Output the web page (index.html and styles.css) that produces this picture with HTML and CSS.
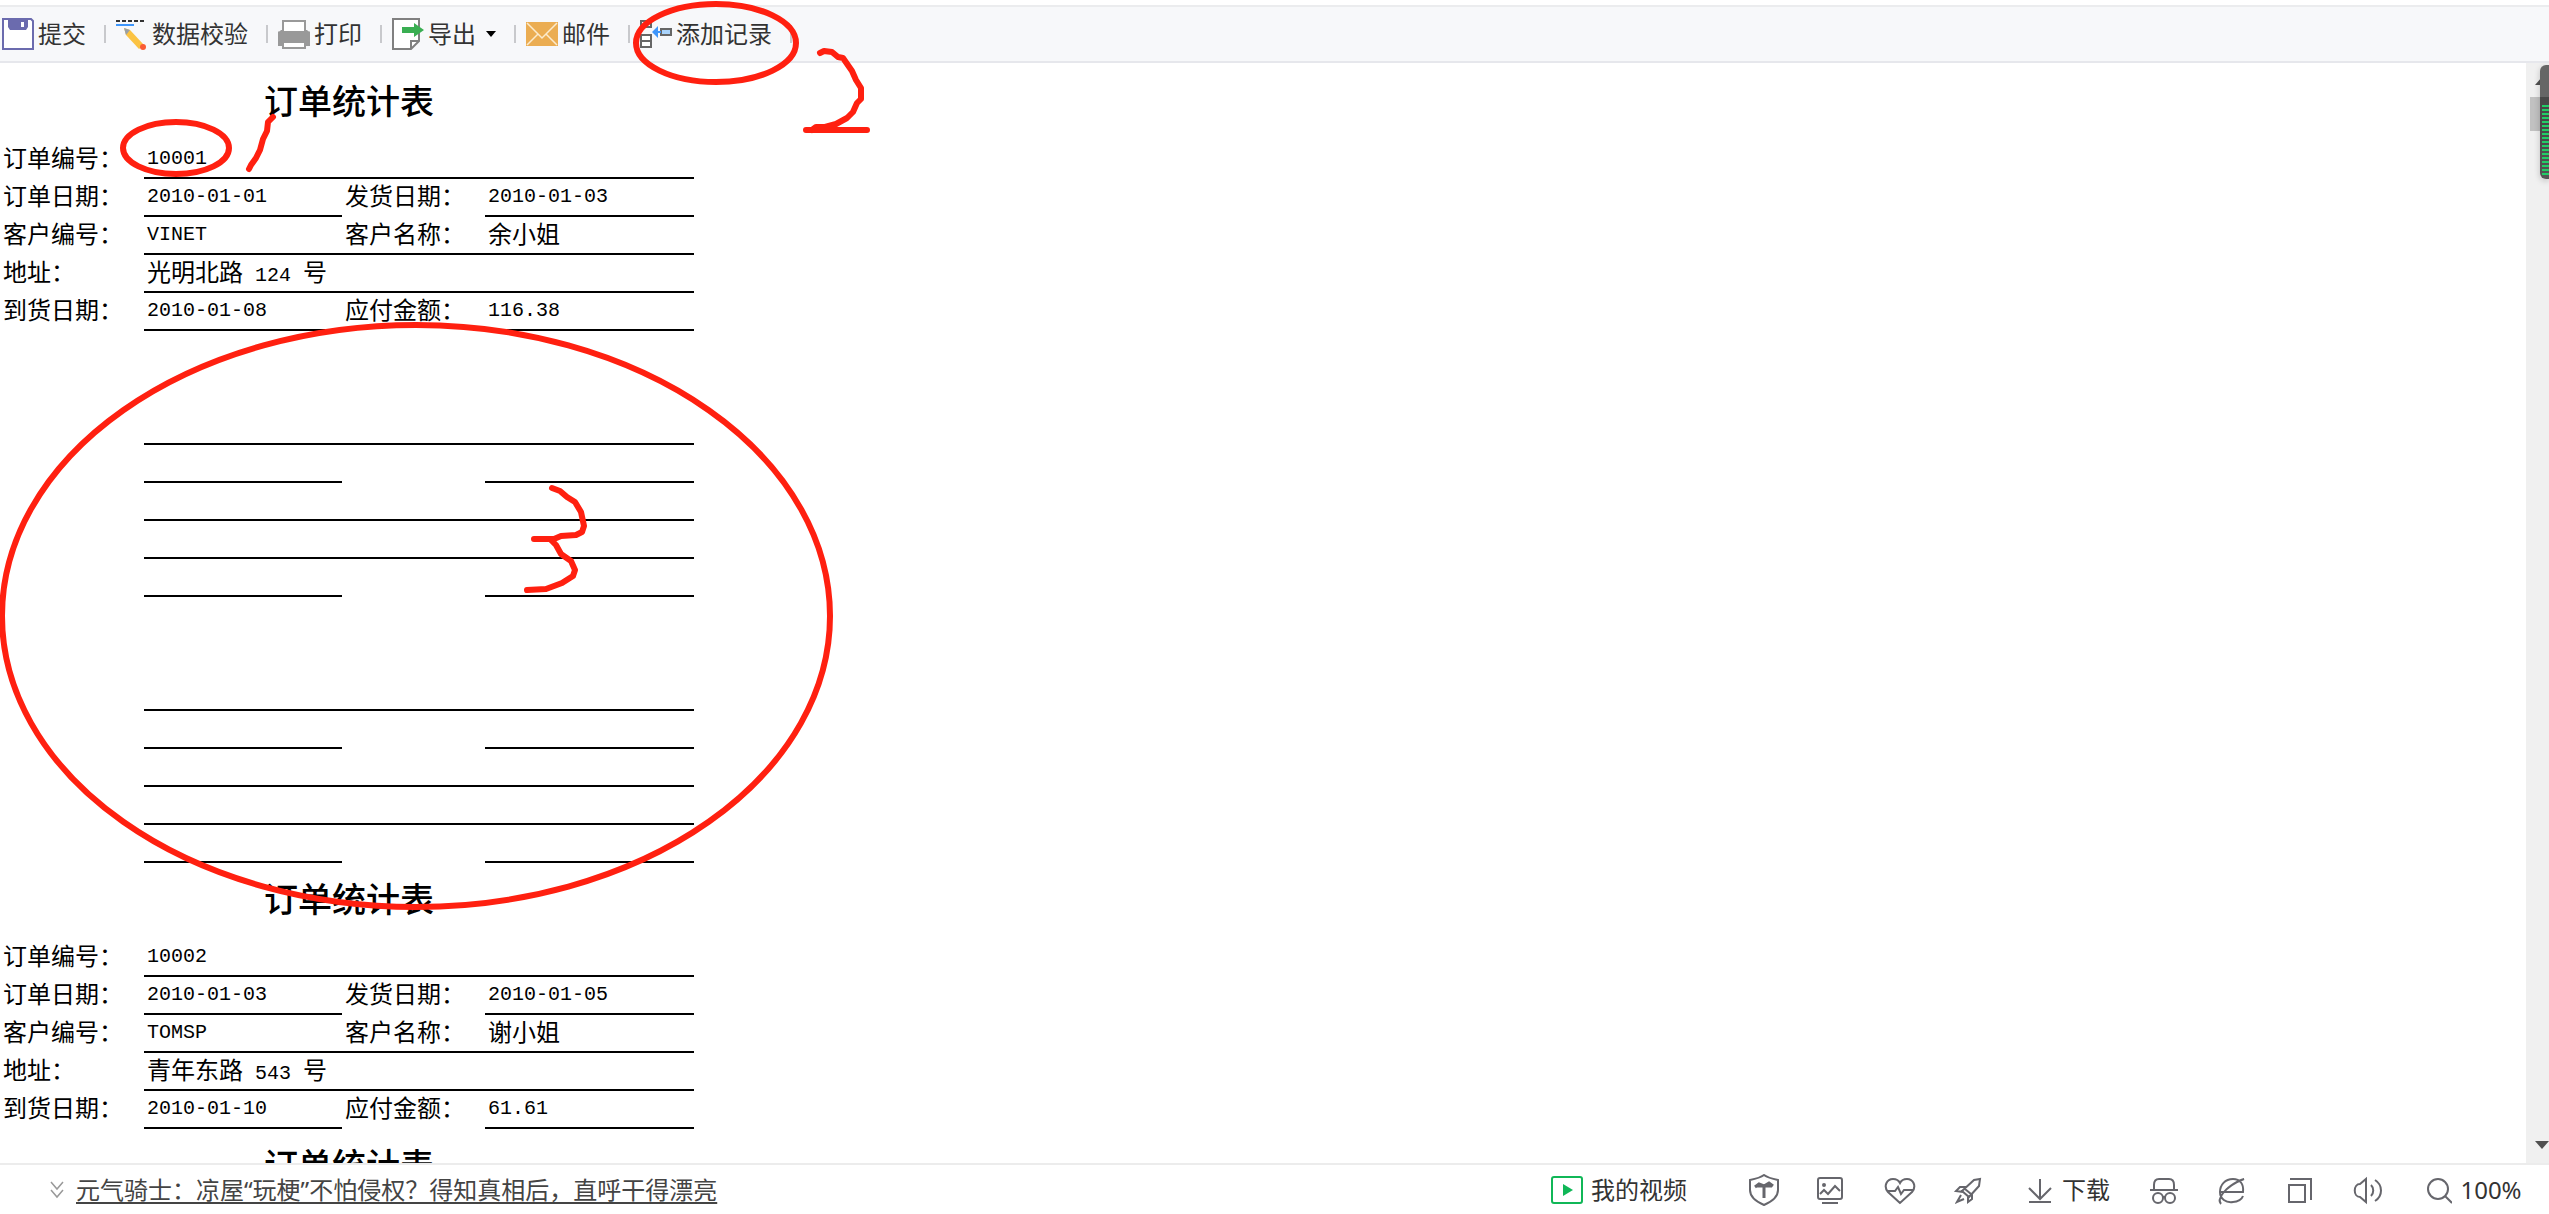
FILE: index.html
```html
<!DOCTYPE html>
<html lang="zh-CN">
<head>
<meta charset="utf-8">
<title>订单统计表</title>
<link rel="stylesheet" href="styles.css">
</head>
<body>
<div class="toolbar" role="toolbar">
  <button class="tool" type="button">
    <svg class="icon" viewBox="0 0 32 32"><path d="M1 1H29L31 3V31H1Z" fill="#fff" stroke="#6b6bae" stroke-width="2"/><path d="M6 1H26V9L24 12H8L6 9Z" fill="#6b6bae"/><rect x="19" y="4" width="3" height="5" fill="#fff"/></svg>
    <span>提交</span>
  </button>
  <i class="sep"></i>
  <button class="tool" type="button">
    <svg class="icon" viewBox="0 0 32 32"><path d="M0 3H28" stroke="#333" stroke-width="2" stroke-dasharray="4 2"/><path d="M0 7H18" stroke="#3f96fb" stroke-width="2"/><path d="M8 10L14 12L28 27L23 31L10 17Z" fill="#fbc343"/><path d="M8 10L14 12L10 17Z" fill="#9aa0a6"/><circle cx="27" cy="29" r="3" fill="#fa5c34"/></svg>
    <span>数据校验</span>
  </button>
  <i class="sep"></i>
  <button class="tool" type="button">
    <svg class="icon" viewBox="0 0 32 32"><path d="M3 12H29L32 15V28H0V15Z" fill="#999"/><rect x="5" y="3" width="22" height="11" fill="#fff" stroke="#999" stroke-width="2"/><path d="M0 15H32" stroke="#999" stroke-width="3"/><rect x="5" y="24" width="22" height="6" fill="#fff" stroke="#999" stroke-width="2"/></svg>
    <span>打印</span>
  </button>
  <i class="sep"></i>
  <button class="tool" type="button">
    <svg class="icon" viewBox="0 0 32 32"><path d="M1 1H27V23L19 31H1Z" fill="#fff" stroke="#808080" stroke-width="2"/><path d="M19 31V23H27" fill="none" stroke="#808080" stroke-width="2"/><path d="M10 9H22V5L32 12L22 19V15H10Z" fill="#3aae52"/></svg>
    <span>导出</span>
    <svg class="caret" viewBox="0 0 10 6"><path d="M0 0H10L5 6Z"/></svg>
  </button>
  <i class="sep"></i>
  <button class="tool" type="button">
    <svg class="icon" viewBox="0 0 32 32"><rect y="4" width="32" height="24" fill="#ebad52"/><path d="M1 5L16 20L31 5M1 27L12 16M31 27L20 16" fill="none" stroke="#fcebcd" stroke-width="1.5"/></svg>
    <span>邮件</span>
  </button>
  <i class="sep"></i>
  <button class="tool" type="button">
    <svg class="icon" viewBox="0 0 32 32"><g fill="#fff" stroke="#666" stroke-width="2"><rect x="1" y="3" width="10" height="6"/><rect x="1" y="17" width="10" height="12"/><path d="M1 23H11"/><rect x="21" y="11" width="10" height="6" fill="#a9d3fb"/></g><path d="M12 14L18 8V13H21V15H18V20Z" fill="#3f96fb"/></svg>
    <span>添加记录</span>
  </button>
  <i class="sep"></i>
</div>

<main class="workspace">
  <div class="sheet">
    <table class="record">
      <caption>订单统计表</caption>
      <colgroup><col class="c-label"><col class="c-value"><col class="c-label2"><col class="c-value2"></colgroup>
      <tr><th scope="row">订单编号：</th><td class="line num" colspan="3">10001</td></tr>
      <tr><th scope="row">订单日期：</th><td class="line num">2010-01-01</td><th scope="row">发货日期：</th><td class="line num">2010-01-03</td></tr>
      <tr><th scope="row">客户编号：</th><td class="line num">VINET</td><th class="line" scope="row">客户名称：</th><td class="line">余小姐</td></tr>
      <tr><th scope="row">地址：</th><td class="line" colspan="3">光明北路<span class="num"> 124 </span>号</td></tr>
      <tr><th scope="row">到货日期：</th><td class="line num">2010-01-08</td><th scope="row">应付金额：</th><td class="line num">116.38</td></tr>
    </table>
    <table class="record">
      <caption></caption>
      <colgroup><col class="c-label"><col class="c-value"><col class="c-label2"><col class="c-value2"></colgroup>
      <tr><th></th><td class="line" colspan="3"></td></tr>
      <tr><th></th><td class="line"></td><th></th><td class="line"></td></tr>
      <tr><th></th><td class="line"></td><th class="line"></th><td class="line"></td></tr>
      <tr><th></th><td class="line" colspan="3"></td></tr>
      <tr><th></th><td class="line"></td><th></th><td class="line"></td></tr>
    </table>
    <table class="record">
      <caption></caption>
      <colgroup><col class="c-label"><col class="c-value"><col class="c-label2"><col class="c-value2"></colgroup>
      <tr><th></th><td class="line" colspan="3"></td></tr>
      <tr><th></th><td class="line"></td><th></th><td class="line"></td></tr>
      <tr><th></th><td class="line"></td><th class="line"></th><td class="line"></td></tr>
      <tr><th></th><td class="line" colspan="3"></td></tr>
      <tr><th></th><td class="line"></td><th></th><td class="line"></td></tr>
    </table>
    <table class="record">
      <caption>订单统计表</caption>
      <colgroup><col class="c-label"><col class="c-value"><col class="c-label2"><col class="c-value2"></colgroup>
      <tr><th scope="row">订单编号：</th><td class="line num" colspan="3">10002</td></tr>
      <tr><th scope="row">订单日期：</th><td class="line num">2010-01-03</td><th scope="row">发货日期：</th><td class="line num">2010-01-05</td></tr>
      <tr><th scope="row">客户编号：</th><td class="line num">TOMSP</td><th class="line" scope="row">客户名称：</th><td class="line">谢小姐</td></tr>
      <tr><th scope="row">地址：</th><td class="line" colspan="3">青年东路<span class="num"> 543 </span>号</td></tr>
      <tr><th scope="row">到货日期：</th><td class="line num">2010-01-10</td><th scope="row">应付金额：</th><td class="line num">61.61</td></tr>
    </table>
    <table class="record">
      <caption>订单统计表</caption>
    </table>
  </div>
  <div class="scrollbar">
    <svg class="arrow" viewBox="0 0 14 8"><path d="M0 8L7 0L14 8Z"/></svg>
    <div class="thumb"></div>
    <svg class="arrow arrow-down" viewBox="0 0 14 8"><path d="M0 0L7 8L14 0Z"/></svg>
    <div class="meter"><div class="meter-bars"></div></div>
  </div>
</main>

<footer class="statusbar">
  <svg class="chevrons" viewBox="0 0 14 18"><path d="M1 1L7 8L13 1M1 9L7 16L13 9" fill="none" stroke="#999" stroke-width="1.5"/></svg>
  <a class="news" href="#">元气骑士：凉屋“玩梗”不怕侵权？得知真相后，直呼干得漂亮</a>
  <div class="status-tools">
    <button class="status video" type="button">
      <svg class="icon" viewBox="0 0 32 32"><rect x="1" y="3" width="30" height="26" rx="2" fill="none" stroke="#10b757" stroke-width="2"/><path d="M12 10L22 16L12 22Z" fill="#10b757"/></svg>
      <span>我的视频</span>
    </button>
    <button class="status" type="button" aria-label="安全">
      <svg class="icon line-icon" viewBox="0 0 32 32"><path d="M16 1C12 4 7 5 2 6V16C2 23 9 28 16 31C23 28 30 23 30 16V6C25 5 20 4 16 1Z"/><path d="M7 13L11 10L16 12L21 9L25 12M8 12H24M16 12V24" stroke-width="3"/></svg>
    </button>
    <button class="status" type="button" aria-label="截图">
      <svg class="icon line-icon" viewBox="0 0 32 32"><rect x="2" y="4" width="24" height="21" rx="2"/><path d="M4 20L8 16L12 20L19 12L24 17M6 29H22"/><circle cx="8" cy="11" r="1"/></svg>
    </button>
    <button class="status" type="button" aria-label="健康">
      <svg class="icon line-icon" viewBox="0 0 32 32"><path d="M16 29L4 18C-1 12 3 5 9 5C13 5 15 7 16 9C17 7 19 5 23 5C29 5 33 12 28 18ZM3 17H11L14 13L17 20L20 16H29"/></svg>
    </button>
    <button class="status" type="button" aria-label="加速">
      <svg class="icon line-icon" viewBox="0 0 32 32"><path d="M10 17L22 6L28 5L27 12L17 23ZM15 13H8L4 17L11 18M20 19V25L16 28L16 23M13 15L19 20M9 21L5 28L12 25"/></svg>
    </button>
    <button class="status download" type="button">
      <svg class="icon line-icon" viewBox="0 0 32 32"><path d="M20 5V24M9 14L20 25L31 14M9 28H31"/></svg>
      <span>下载</span>
    </button>
    <button class="status" type="button" aria-label="无痕">
      <svg class="icon line-icon" viewBox="0 0 32 32"><path d="M6 15V11C6 7 8 5 11 5H21C24 5 26 7 26 11V15M2 16H30"/><circle cx="10" cy="24" r="5"/><circle cx="22" cy="24" r="5"/><path d="M14 23H18"/></svg>
    </button>
    <button class="status" type="button" aria-label="兼容模式">
      <svg class="icon line-icon" viewBox="0 0 32 32"><path d="M5 18H27C28 10 24 5 17 5C9 5 4 11 4 18C4 25 10 29 17 28C22 28 26 25 27 22M5 30C1 26 7 13 28 5C20 7 7 17 9 18"/></svg>
    </button>
    <button class="status" type="button" aria-label="窗口">
      <svg class="icon line-icon" viewBox="0 0 32 32"><rect x="5" y="11" width="16" height="17"/><path d="M6 5H27V26"/></svg>
    </button>
    <button class="status" type="button" aria-label="声音">
      <svg class="icon line-icon" viewBox="0 0 32 32"><path d="M14 5V28L8 23C1 23 1 10 8 10ZM19 11C22 14 22 19 19 22M23 6C31 11 31 22 23 27"/></svg>
    </button>
    <button class="status zoom" type="button">
      <svg class="icon line-icon" viewBox="0 0 32 32"><circle cx="18" cy="15" r="10"/><path d="M25 22L32 29"/></svg>
      <span>100%</span>
    </button>
  </div>
</footer>

<svg class="markup" width="900" height="940" viewBox="0 0 900 940" aria-hidden="true">
  <ellipse cx="176" cy="148" rx="53" ry="26"/>
  <ellipse cx="716" cy="43" rx="80" ry="39"/>
  <ellipse cx="416" cy="616" rx="414" ry="291"/>
  <path d="M273 117L268 122L267 131L263 139L260 150L256 158L251 165L249 169"/>
  <path d="M820 53L824 51L832 52L838 57L843 58L852 71L856 80L861 88L861 99L857 103L853 112L847 118L836 124L825 127L816 127L812 130M806 130H867"/>
  <path d="M552 488L560 491L567 497L575 502L581 512L584 526L582 532L576 535L561 536L554 539H534M551 540L556 545L561 554L571 561L575 570L573 576L562 583L546 589L527 590"/>
</svg>
</body>
</html>
```
FILE: styles.css
```css
* {
  box-sizing: border-box;
}

body {
  margin: 0;
  height: 100vh;
  display: flex;
  flex-direction: column;
  overflow: hidden;
  position: relative;
  background: #fff;
  color: #000;
  font: 24px/36px "Noto Sans", "Noto Sans CJK SC", sans-serif;
}

button {
  padding: 0;
  border: 0;
  background: none;
  color: #333;
  font: inherit;
}

.icon {
  width: 32px;
  height: 32px;
  flex: none;
}

/* toolbar */
.toolbar {
  flex: none;
  display: flex;
  align-items: center;
  gap: 10px;
  height: 58px;
  margin-top: 5px;
  padding-left: 2px;
  background: #f7f8fa;
  border-top: 2px solid #ebecee;
  border-bottom: 2px solid #e6e7ec;
}

.tool {
  display: flex;
  align-items: center;
  gap: 4px;
  margin-right: 8px;
}

.sep {
  width: 2px;
  height: 18px;
  background: #c8c9cc;
}

.caret {
  width: 10px;
  height: 6px;
  margin-left: 6px;
}

/* report */
.workspace {
  flex: 1;
  min-height: 0;
  display: flex;
}

.sheet {
  flex: 1;
  min-width: 0;
  padding-top: 2px;
  overflow: hidden;
  font-family: "Noto Sans CJK SC", sans-serif;
}

.record {
  width: 694px;
  table-layout: fixed;
  border-collapse: separate;
  border-spacing: 0;
}

.c-label {
  width: 144px;
}

.c-value {
  width: 198px;
}

.c-label2 {
  width: 143px;
}

.c-value2 {
  width: 209px;
}

.record caption {
  height: 76px;
  padding-left: 4px;
  font-size: 34px;
  line-height: 70px;
  font-weight: 500;
}

.record th,
.record td {
  height: 38px;
  padding: 0 3px;
  border-bottom: 2px solid transparent;
  line-height: 32px;
  font-weight: 400;
  text-align: left;
  vertical-align: top;
  white-space: nowrap;
}

.record .line {
  border-bottom-color: #000;
}

.record .num {
  font-family: "Liberation Mono", monospace;
  font-size: 20px;
  white-space: pre;
}

.record td.num {
  line-height: 36px;
}

.record span.num {
  line-height: 20px;
}

/* scroll bar */
.scrollbar {
  flex: none;
  position: relative;
  display: flex;
  flex-direction: column;
  align-items: flex-end;
  width: 23px;
  padding: 14px 0;
  background: #f0f0f0;
}

.arrow {
  width: 14px;
  height: 8px;
  fill: #505050;
}

.arrow-down {
  margin-top: auto;
}

.thumb {
  width: 19px;
  height: 34px;
  margin-top: 12px;
  background: #c1c1c1;
}

.meter {
  position: absolute;
  top: 2px;
  right: 0;
  width: 9px;
  height: 114px;
  padding: 40px 0 4px 2px;
  border-radius: 6px 0 0 6px;
  background: linear-gradient(#666 0 32px, #484848 32px 64px, #555);
  box-shadow: 0 2px 6px #0003;
}

.meter-bars {
  height: 100%;
  background: repeating-linear-gradient(#22cc66 0 2px, transparent 2px 4px);
}

/* status bar */
.statusbar {
  flex: none;
  display: flex;
  align-items: center;
  height: 51px;
  padding: 0 27px 0 50px;
  border-top: 2px solid #ececec;
}

.chevrons {
  width: 14px;
  height: 18px;
  margin-right: 12px;
}

.news {
  color: #444;
  line-height: 30px;
  white-space: nowrap;
  text-decoration-thickness: 2px;
  text-underline-offset: 3px;
}

.status-tools {
  display: flex;
  align-items: center;
  gap: 36px;
  margin-left: auto;
}

.status {
  display: flex;
  align-items: center;
  gap: 8px;
}

.video {
  margin-right: 25px;
}

.download {
  gap: 10px;
  margin-right: 2px;
}

.zoom span {
  min-width: 62px;
}

.line-icon {
  fill: none;
  stroke: #66666c;
  stroke-width: 2;
}

/* pen marks over the page */
.markup {
  position: absolute;
  top: 0;
  left: 0;
  pointer-events: none;
  fill: none;
  stroke: #ff2010;
  stroke-width: 6;
  stroke-linecap: round;
  stroke-linejoin: round;
}
```
